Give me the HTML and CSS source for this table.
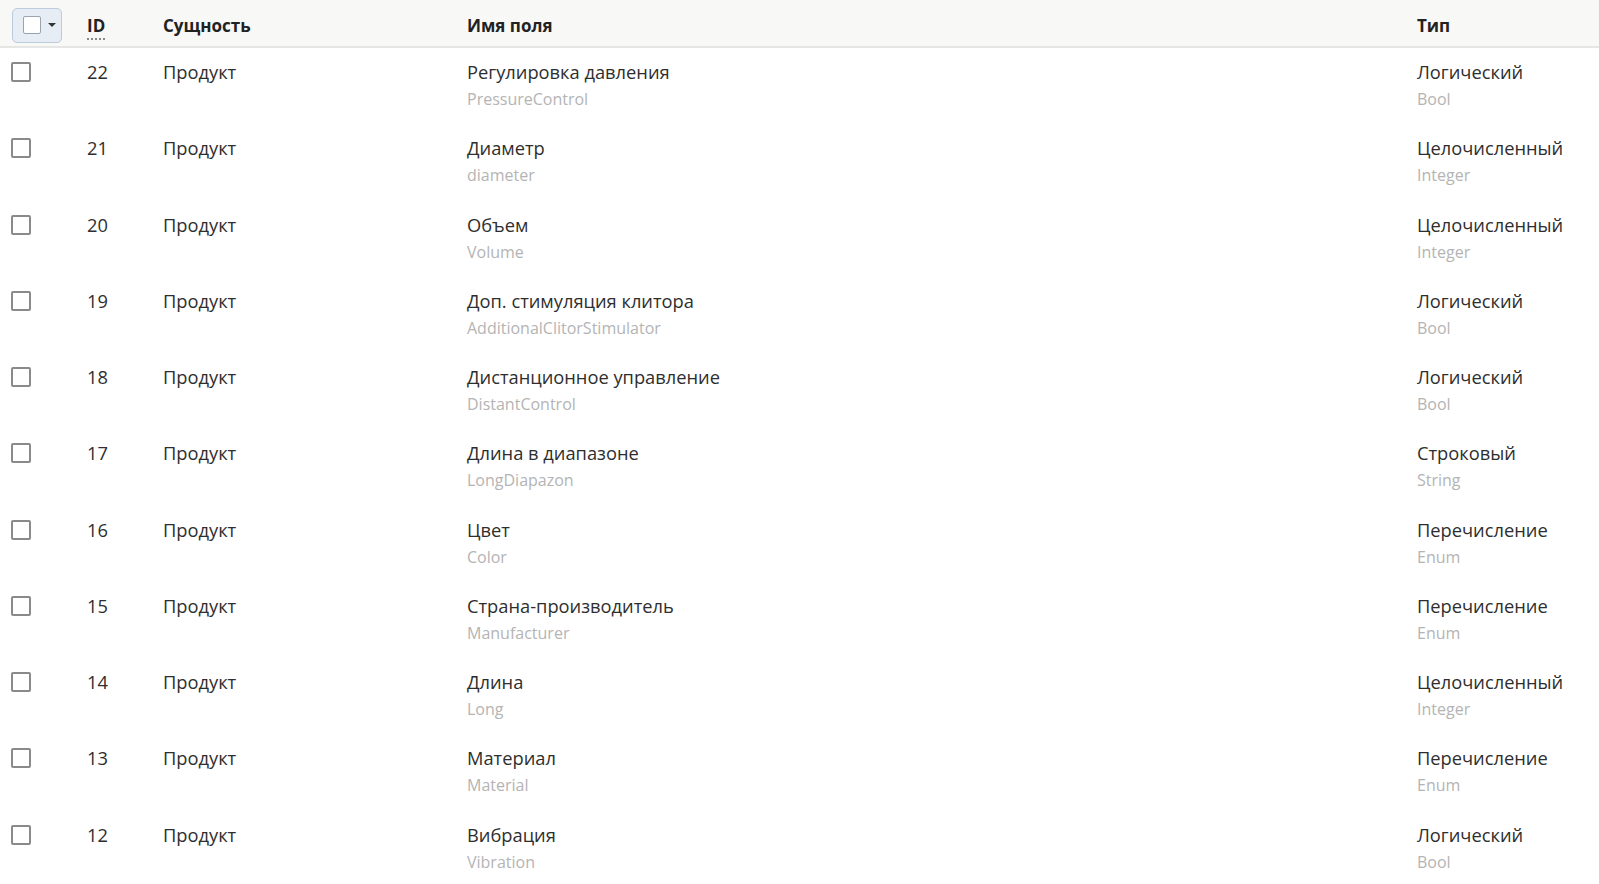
FILE: index.html
```html
<!DOCTYPE html>
<html lang="ru">
<head>
<meta charset="utf-8">
<title>Поля</title>
<link rel="stylesheet" href="styles.css">
</head>
<body>
<div class="grid">
  <div class="head">
    <div class="cell c-check">
      <button class="bulk"><span class="box"></span><span class="caret"></span></button>
    </div>
    <div class="cell c-id"><span class="sortable">ID</span></div>
    <div class="cell c-ent">Сущность</div>
    <div class="cell c-name">Имя поля</div>
    <div class="cell c-type">Тип</div>
  </div>

  <div class="row">
    <div class="cell c-check"><span class="cb"></span></div>
    <div class="cell c-id">22</div>
    <div class="cell c-ent">Продукт</div>
    <div class="cell c-name"><div class="main">Регулировка давления</div><div class="sub">PressureControl</div></div>
    <div class="cell c-type"><div class="main">Логический</div><div class="sub">Bool</div></div>
  </div>
  <div class="row">
    <div class="cell c-check"><span class="cb"></span></div>
    <div class="cell c-id">21</div>
    <div class="cell c-ent">Продукт</div>
    <div class="cell c-name"><div class="main">Диаметр</div><div class="sub">diameter</div></div>
    <div class="cell c-type"><div class="main">Целочисленный</div><div class="sub">Integer</div></div>
  </div>
  <div class="row">
    <div class="cell c-check"><span class="cb"></span></div>
    <div class="cell c-id">20</div>
    <div class="cell c-ent">Продукт</div>
    <div class="cell c-name"><div class="main">Объем</div><div class="sub">Volume</div></div>
    <div class="cell c-type"><div class="main">Целочисленный</div><div class="sub">Integer</div></div>
  </div>
  <div class="row">
    <div class="cell c-check"><span class="cb"></span></div>
    <div class="cell c-id">19</div>
    <div class="cell c-ent">Продукт</div>
    <div class="cell c-name"><div class="main">Доп. стимуляция клитора</div><div class="sub">AdditionalClitorStimulator</div></div>
    <div class="cell c-type"><div class="main">Логический</div><div class="sub">Bool</div></div>
  </div>
  <div class="row">
    <div class="cell c-check"><span class="cb"></span></div>
    <div class="cell c-id">18</div>
    <div class="cell c-ent">Продукт</div>
    <div class="cell c-name"><div class="main">Дистанционное управление</div><div class="sub">DistantControl</div></div>
    <div class="cell c-type"><div class="main">Логический</div><div class="sub">Bool</div></div>
  </div>
  <div class="row">
    <div class="cell c-check"><span class="cb"></span></div>
    <div class="cell c-id">17</div>
    <div class="cell c-ent">Продукт</div>
    <div class="cell c-name"><div class="main">Длина в диапазоне</div><div class="sub">LongDiapazon</div></div>
    <div class="cell c-type"><div class="main">Строковый</div><div class="sub">String</div></div>
  </div>
  <div class="row">
    <div class="cell c-check"><span class="cb"></span></div>
    <div class="cell c-id">16</div>
    <div class="cell c-ent">Продукт</div>
    <div class="cell c-name"><div class="main">Цвет</div><div class="sub">Color</div></div>
    <div class="cell c-type"><div class="main">Перечисление</div><div class="sub">Enum</div></div>
  </div>
  <div class="row">
    <div class="cell c-check"><span class="cb"></span></div>
    <div class="cell c-id">15</div>
    <div class="cell c-ent">Продукт</div>
    <div class="cell c-name"><div class="main">Страна-производитель</div><div class="sub">Manufacturer</div></div>
    <div class="cell c-type"><div class="main">Перечисление</div><div class="sub">Enum</div></div>
  </div>
  <div class="row">
    <div class="cell c-check"><span class="cb"></span></div>
    <div class="cell c-id">14</div>
    <div class="cell c-ent">Продукт</div>
    <div class="cell c-name"><div class="main">Длина</div><div class="sub">Long</div></div>
    <div class="cell c-type"><div class="main">Целочисленный</div><div class="sub">Integer</div></div>
  </div>
  <div class="row">
    <div class="cell c-check"><span class="cb"></span></div>
    <div class="cell c-id">13</div>
    <div class="cell c-ent">Продукт</div>
    <div class="cell c-name"><div class="main">Материал</div><div class="sub">Material</div></div>
    <div class="cell c-type"><div class="main">Перечисление</div><div class="sub">Enum</div></div>
  </div>
  <div class="row">
    <div class="cell c-check"><span class="cb"></span></div>
    <div class="cell c-id">12</div>
    <div class="cell c-ent">Продукт</div>
    <div class="cell c-name"><div class="main">Вибрация</div><div class="sub">Vibration</div></div>
    <div class="cell c-type"><div class="main">Логический</div><div class="sub">Bool</div></div>
  </div>
</div>
</body>
</html>
```

FILE: styles.css
```css
html, body {
  margin: 0;
  padding: 0;
  background: #ffffff;
  overflow: hidden;
}
body {
  font-family: "Open Sans", "Noto Sans", sans-serif;
  font-size: 18.3px;
  color: #2e2e2e;
}
.grid {
  display: flex;
  flex-direction: column;
}
.head, .row {
  display: grid;
  grid-template-columns: 87px 76px 304px 950px 1fr;
}
.head {
  height: 48px;
  background: #f8f8f6;
  border-bottom: 2px solid #e6e6e4;
  box-sizing: border-box;
  font-size: 17px;
  font-weight: 700;
  color: #222222;
  align-items: center;
}
.head .cell {
  padding-top: 5px;
}
.head .c-check {
  padding-top: 4px;
}
.bulk {
  display: flex;
  align-items: center;
  width: 50px;
  height: 35px;
  margin-left: 12px;
  margin-top: 0;
  padding: 0 0 0 10px;
  box-sizing: border-box;
  background: #e6edf4;
  border: 1px solid #bccbdb;
  border-radius: 5px;
}
.bulk .box {
  width: 16px;
  height: 16px;
  background: #ffffff;
  border: 1px solid #9aa4ae;
  border-radius: 2px;
}
.bulk .caret {
  width: 0;
  height: 0;
  margin-left: 7px;
  border-left: 4px solid transparent;
  border-right: 4px solid transparent;
  border-top: 4px solid #333333;
}
.sortable {
  border-bottom: 2px dotted #888888;
  padding-bottom: 1px;
}
.row {
  height: 76.28px;
  box-sizing: border-box;
  padding-top: 11px;
}
.row .cell {
  line-height: 26px;
}
.row .c-check {
  padding-left: 11px;
  padding-top: 3px;
}
.cb {
  display: block;
  width: 16px;
  height: 16px;
  border: 2px solid #8a8a8a;
  border-radius: 2px;
  background: #ffffff;
}
.sub {
  margin-top: 2px;
  line-height: 24px;
  font-size: 16px;
  color: #b4b4b4;
}
```
